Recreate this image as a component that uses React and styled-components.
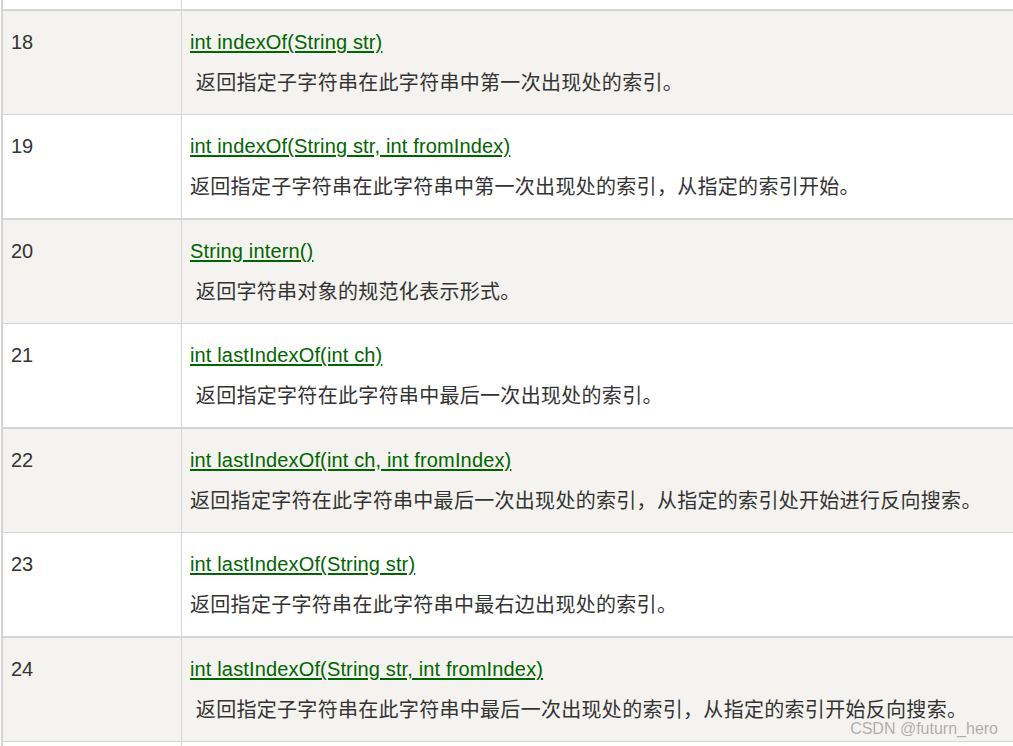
import React from "react";
import styled, { createGlobalStyle } from "styled-components";

const rows = [
  { no: 18, sig: "int indexOf(String str)", desc: " 返回指定子字符串在此字符串中第一次出现处的索引。", shaded: true },
  { no: 19, sig: "int indexOf(String str, int fromIndex)", desc: "返回指定子字符串在此字符串中第一次出现处的索引，从指定的索引开始。" },
  { no: 20, sig: "String intern()", desc: " 返回字符串对象的规范化表示形式。", shaded: true },
  { no: 21, sig: "int lastIndexOf(int ch)", desc: " 返回指定字符在此字符串中最后一次出现处的索引。" },
  { no: 22, sig: "int lastIndexOf(int ch, int fromIndex)", desc: "返回指定字符在此字符串中最后一次出现处的索引，从指定的索引处开始进行反向搜索。", shaded: true },
  { no: 23, sig: "int lastIndexOf(String str)", desc: "返回指定子字符串在此字符串中最右边出现处的索引。" },
  { no: 24, sig: "int lastIndexOf(String str, int fromIndex)", desc: " 返回指定子字符串在此字符串中最后一次出现处的索引，从指定的索引开始反向搜索。", shaded: true },
];

const GlobalStyle = createGlobalStyle`
  html, body {
    margin: 0;
    padding: 0;
    background: #ffffff;
    overflow: hidden;
  }
  body {
    font-family: "Liberation Sans", "Noto Sans CJK SC", sans-serif;
    color: #333333;
  }
`;

const Page = styled.div`
  position: relative;
  width: 1013px;
  height: 746px;
  overflow: hidden;
  padding-left: 1px;
  box-sizing: border-box;
`;

const Table = styled.div`
  border-left: 2px solid #d4d4d4;
  display: flex;
  flex-direction: column;
`;

const Row = styled.div`
  display: grid;
  grid-template-columns: 179px 1fr;
  background: ${(p) => (p.$shaded ? "#f4f3ef" : "#ffffff")};
  border-top: ${(p) => (p.$shaded ? "1px solid #d4d4d4" : "none")};
  border-bottom: ${(p) => (p.$last ? "none" : "1px solid #d4d4d4")};
  height: ${(p) => (p.$h ? `${p.$h}px` : "auto")};
  flex-shrink: 0;
`;

const NumCell = styled.div`
  padding: ${(p) => (p.$empty ? "0" : "16px 8px 16px")};
  border-right: 1px solid #d4d4d4;
  font-size: 20px;
  line-height: 30px;
`;

const DescCell = styled.div`
  padding: 16px 8px 16px;
  display: flex;
  flex-direction: column;
  gap: 11px;
  font-size: 20px;
  line-height: 30px;
`;

const Sig = styled.a`
  color: #006600;
  text-decoration: underline;
  text-decoration-thickness: 2px;
  text-underline-offset: 2px;
  letter-spacing: 0.15px;
  align-self: flex-start;
  white-space: pre;
`;

const Desc = styled.div`
  white-space: pre;
  letter-spacing: 0.3px;
`;

const Watermark = styled.div`
  position: absolute;
  right: 15px;
  bottom: 8px;
  font-size: 16px;
  color: rgba(150, 150, 150, 0.75);
  font-family: "Liberation Sans", sans-serif;
`;

const App = () => {
  return (
    <>
      <GlobalStyle />
      <Page>
        <Table>
          <Row $h={9}>
            <NumCell $empty />
            <div />
          </Row>
          {rows.map((r) => (
            <Row key={r.no} $shaded={r.shaded}>
              <NumCell>{r.no}</NumCell>
              <DescCell>
                <Sig href="#">{r.sig}</Sig>
                <Desc>{r.desc}</Desc>
              </DescCell>
            </Row>
          ))}
          <Row $last $h={10}>
            <NumCell $empty />
            <div />
          </Row>
        </Table>
        <Watermark>CSDN @futurn_hero</Watermark>
      </Page>
    </>
  );
};

export default App;
